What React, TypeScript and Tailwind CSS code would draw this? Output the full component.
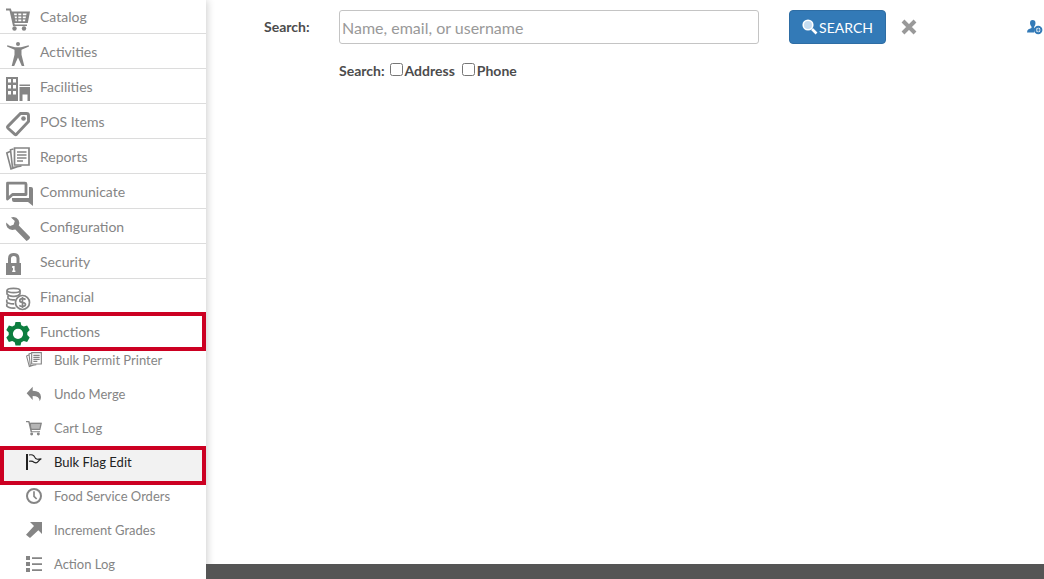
import { useState, ReactNode } from "react";

type Item = { nome: string; icon: ReactNode; active?: boolean; marked?: boolean };

function Svg({ children, small = false }: { children: ReactNode; small?: boolean }) {
    return (
        <svg viewBox="0 0 24 24" className={small ? "h-4 w-4 shrink-0" : "h-6 w-6 shrink-0 overflow-visible"} fill="currentColor" aria-hidden="true">
            {children}
        </svg>
    );
}

const papers = (
    <>
        <path d="M8.500 1h14.500v17H8.500z" fill="none" stroke="currentColor" strokeWidth="1.700" />
        <path d="M11 5h9.500M11 8h9.500M11 11h9.500M11 14h6" fill="none" stroke="currentColor" strokeWidth="1.700" />
        <path d="M7.500 2l-3 .8 2 17.700 9-1.500M4 4.500l-3.200 1.500 4.200 16 7-2.500" fill="none" stroke="currentColor" strokeWidth="1.600" />
    </>
);

const menu: Item[] = [
    {
        nome: "Catalog",
        icon: (
            <Svg>
                <path d="M0 1.500h4.800l1 3H24l-2.200 11.500H8.300l.5 1.500H21V19H7L3.500 3.500H0zM8 6.500l.3 1.800h2.500V6.500zm4.300 0v1.800h3V6.500zm4.500 0v1.800h3.400l.4-1.800zM8.600 9.500l.4 1.800h1.800V9.500zm3.700 0v1.800h3V9.500zm4.500 0v1.800h2.800l.4-1.800zM9.200 12.500l.4 1.800h1.200v-1.800zm3.100 0v1.800h3v-1.800zm4.500 0v1.800h2.200l.4-1.800z" fillRule="evenodd" />
                <circle cx="8.500" cy="21.500" r="2.200" />
                <circle cx="18" cy="21.500" r="2.200" />
            </Svg>
        ),
    },
    {
        nome: "Activities",
        icon: (
            <Svg>
                <circle cx="12" cy="2" r="2" />
                <path d="M1.300 3.300L9 5.300h6l7.700-2 .3 1.200-7.500 3.200v5l2.800 11.300h-2.500L12 15.500 8.200 24H5.700l2.800-11.300v-5L1 4.500z" />
            </Svg>
        ),
    },
    {
        nome: "Facilities",
        icon: (
            <Svg>
                <path d="M0 0h12v24H0zM2 2v3.500h3V2zm5 0v3.500h3V2zM2 8v3.500h3V8zm5 0v3.500h3V8zM2 14v3.500h3V14zm5 0v3.500h3V14z" fillRule="evenodd" />
                <path d="M13.500 7.500H24V9H13.500zM13.500 10H24v14h-2.500v-6.500h-5V24h-3z" />
            </Svg>
        ),
    },
    {
        nome: "POS Items",
        icon: (
            <Svg>
                <path d="M14.500 1.500h6q2 0 2 2v6L10.500 22.300q-.8.700-1.600 0l-7.100-6.300q-.8-.8 0-1.600z" fill="none" stroke="currentColor" strokeWidth="2.900" />
                <circle cx="17.500" cy="6.500" r="2.300" />
            </Svg>
        ),
    },
    { nome: "Reports", icon: <Svg>{papers}</Svg> },
    {
        nome: "Communicate",
        icon: (
            <Svg>
                <path d="M1.500 1.200h17.500q1 0 1 1v10.300H6.500l-5 4.500z" fill="none" stroke="currentColor" strokeWidth="2.800" strokeLinejoin="round" />
                <path d="M23 5h2q2 0 2 2v17l-5-4H8q-2 0-2-2v-2h17z" />
            </Svg>
        ),
    },
    {
        nome: "Configuration",
        icon: (
            <Svg>
                <path d="M5 .5q5-1.500 7.500 2.500 1.500 2.700.3 5.500L24 20q.3 2-3.500 4L9.300 12.500Q4 14 1.300 10.500-.3 8.500.2 5.500L4 9l3.500-1.200L8.800 4z" />
            </Svg>
        ),
    },
    {
        nome: "Security",
        icon: (
            <Svg>
                <path d="M2 11V6.500Q2 1 7.800 1t5.700 5.500V11H15v12H0V11zM5 11h5.500V6.500Q10.500 4 7.800 4T5 6.500zm1.200 3v2h.8v2.500h-.8V20h3.200v-1.500h-.8V14z" fillRule="evenodd" />
            </Svg>
        ),
    },
    {
        nome: "Financial",
        icon: (
            <Svg>
                <g fill="none" stroke="currentColor" strokeWidth="1.700">
                    <ellipse cx="7.500" cy="3.500" rx="6.500" ry="2.200" />
                    <path d="M1 3.500V7q2 2.500 6.500 2.300Q12 9.500 14 7V3.500M2 9v2.300q2 2.200 7 1.500M.8 12.500V15q1.500 2 7.500 1.800M.8 16.500V19q2 2.500 8.700 2" />
                    <circle cx="16.500" cy="15.500" r="7" />
                    <path d="M19.500 12.700q-1-1-3-1-2.700 0-2.700 1.800t2.700 2q3 .3 3 2t-3 1.900q-2 0-3.200-1.100M16.500 10v11" />
                </g>
            </Svg>
        ),
    },
    {
        nome: "Functions",
        marked: true,
        icon: (
            <span className="text-[#0c7e3f]">
                <Svg>
                    <path d="M9.500 0h5l.8 3.200 2.500 1.400 3.300-1L23.700 8l-2.400 2.500v2.500l2.400 2.500-2.600 4.400-3.300-1-2.500 1.400-.8 3.200h-5l-.8-3.200-2.500-1.400-3.300 1L.3 15.500l2.400-2.500v-2.500L.3 8l2.600-4.400 3.300 1 2.500-1.400zM12 6.700a5.100 5.100 0 100 10.200 5.100 5.100 0 000-10.200z" fillRule="evenodd" />
                </Svg>
            </span>
        ),
    },
];

const functions: Item[] = [
    { nome: "Bulk Permit Printer", icon: <Svg small>{papers}</Svg> },
    {
        nome: "Undo Merge",
        icon: (
            <Svg small>
                <path d="M10 1v6q12 0 12.500 9.500 0 3.500-2 6.500 0-8-10.500-8v6L1 11z" />
            </Svg>
        ),
    },
    {
        nome: "Cart Log",
        icon: (
            <Svg small>
                <path d="M7 4h16l-2.500 10H9z" opacity=".6" />
                <path d="M0 1.500h5l1 2.500h18l-2.500 11h-13l.5 2H21v1.500H7L3.500 3.500H0zM7.500 6l1.300 7H20l1.500-7z" fillRule="evenodd" />
                <circle cx="8.500" cy="21" r="2.200" />
                <circle cx="18.500" cy="21" r="2.200" />
            </Svg>
        ),
    },
    {
        nome: "Bulk Flag Edit",
        active: true,
        marked: true,
        icon: (
            <Svg small>
                <path d="M0 0h3v24H0z" />
                <path d="M4.500 1.500q4.500-1.500 7.500 1.500 2 4.500 5 5l6-1q-3 1.500-5 4.500t-6 1q-2-2.500-7.500-1.500" fill="none" stroke="currentColor" strokeWidth="1.600" />
            </Svg>
        ),
    },
    {
        nome: "Food Service Orders",
        icon: (
            <Svg small>
                <circle cx="12" cy="12" r="10.500" fill="none" stroke="currentColor" strokeWidth="3" />
                <path d="M12 5v7.500l4 4" fill="none" stroke="currentColor" strokeWidth="2.500" />
            </Svg>
        ),
    },
    {
        nome: "Increment Grades",
        icon: (
            <Svg small>
                <path d="M6 0h18v18l-5.500-5.500L6 24l-6-5L12 6z" />
            </Svg>
        ),
    },
    {
        nome: "Action Log",
        icon: (
            <Svg small>
                <path d="M0 0h6v6H0zM0 9h6v6H0zM0 18h6v6H0zM9 2h15v2.500H9zM9 11h15v2.500H9zM9 20h15v2.500H9z" />
            </Svg>
        ),
    },
];

function Sidebar() {
    return (
        <nav className="w-[206px] shrink-0 bg-white text-[#858585] shadow-[1px_0_8px_rgba(0,0,0,0.2)]">
            <ul className="-mt-px">
                {menu.map((item) => (
                    <li key={item.nome} className="relative h-[35px] border-b border-[#dcdcdc] last:h-[34px] last:border-b-0">
                        <a href="#" className="grid h-full grid-cols-[34px_1fr] items-start pl-[6px] text-[14px] leading-9">
                            <span className="mt-2">{item.icon}</span>
                            {item.nome}
                        </a>
                        {item.marked && <span className="pointer-events-none absolute inset-x-0 -top-[2px] z-10 h-[39px] border-4 border-[#cc0022]" />}
                    </li>
                ))}
            </ul>
            <ul>
                {functions.map((item) => (
                    <li key={item.nome} className={item.active ? "relative h-[34px] bg-[#f2f2f2] text-[#222]" : "relative h-[34px]"}>
                        <a href="#" className="flex items-center gap-3 pl-[26px] text-[13px] leading-6">
                            {item.icon}
                            {item.nome}
                        </a>
                        {item.marked && <span className="pointer-events-none absolute inset-x-0 -top-1 z-10 h-[39px] border-4 border-[#cc0022]" />}
                    </li>
                ))}
            </ul>
        </nav>
    );
}

export default function App() {
    const [busca, setBusca] = useState("");
    const [address, setAddress] = useState(false);
    const [phone, setPhone] = useState(false);

    const handleSubmit = (e: React.FormEvent) => {
        e.preventDefault();
    };

    return (
        <div className="flex h-screen overflow-hidden bg-white font-['Lato',sans-serif] text-[14px] text-[#4c4c4c]">
            <Sidebar />
            <div className="flex min-w-0 flex-1 flex-col">
                <main className="flex-1">
                    <form onSubmit={handleSubmit} className="flex items-start pt-[10px] pl-[58px]">
                        <label htmlFor="busca" className="w-[75px] shrink-0 leading-[34px] font-bold">Search:</label>
                        <div className="max-w-[420px] flex-1">
                            <input
                                id="busca"
                                type="text"
                                placeholder="Name, email, or username"
                                value={busca}
                                onChange={(e) => setBusca(e.target.value)}
                                className="h-[34px] w-full rounded-[3px] border border-[#c4c4c4] px-[2px] text-[16px] placeholder:text-[#999]"
                            />
                            <div className="mt-[17px] flex items-center leading-5 font-bold">
                                <span className="mr-[5px]">Search:</span>
                                <input id="address" type="checkbox" checked={address} onChange={(e) => setAddress(e.target.checked)} className="mr-[2px] mb-[3px] h-[13px] w-[13px]" />
                                <label htmlFor="address" className="mr-[7px]">Address</label>
                                <input id="phone" type="checkbox" checked={phone} onChange={(e) => setPhone(e.target.checked)} className="mr-[2px] mb-[3px] h-[13px] w-[13px]" />
                                <label htmlFor="phone">Phone</label>
                            </div>
                        </div>
                        <button type="submit" className="ml-[30px] flex h-[34px] w-[97px] items-center justify-center rounded-[4px] border border-[#2e6da4] bg-[#337ab7] text-white">
                            <svg viewBox="0 0 16 16" className="mr-px h-4 w-4" aria-hidden="true">
                                <path d="M10 10l4.500 4.500" stroke="#fff" strokeWidth="2.600" />
                                <circle cx="6" cy="6" r="4.800" fill="#c6dcf0" stroke="#fff" strokeWidth="1.600" />
                            </svg>
                            SEARCH
                        </button>
                        <button type="button" aria-label="Clear" onClick={() => setBusca("")} className="ml-[15px] flex h-[34px] items-center text-[#999]">
                            <svg viewBox="0 0 16 16" className="h-4 w-4" aria-hidden="true">
                                <path d="M2 2l12 12M14 2L2 14" stroke="currentColor" strokeWidth="4" />
                            </svg>
                        </button>
                        <a href="#" aria-label="Add user" className="mr-px ml-auto flex h-[34px] items-center text-[#337ab7]">
                            <svg viewBox="0 0 16 16" className="h-4 w-4" fill="currentColor" aria-hidden="true">
                                <path d="M5.500 1q3 0 3 3.300 0 2-1.300 3.400v1.300l1 .6q-1.400 1.400-1 3.900H0Q0 11 1.500 10.200L4.500 9V7.700Q3 6.300 3 4.300 3 1 5.500 1z" />
                                <circle cx="11.200" cy="11" r="3.200" fill="#fff" stroke="currentColor" strokeWidth="2" />
                                <path d="M11.200 9.200v3.600M9.400 11h3.600" stroke="currentColor" strokeWidth="1.200" />
                            </svg>
                        </a>
                    </form>
                </main>
                <footer className="relative h-[15px] bg-[#555]" />
            </div>
        </div>
    );
}
